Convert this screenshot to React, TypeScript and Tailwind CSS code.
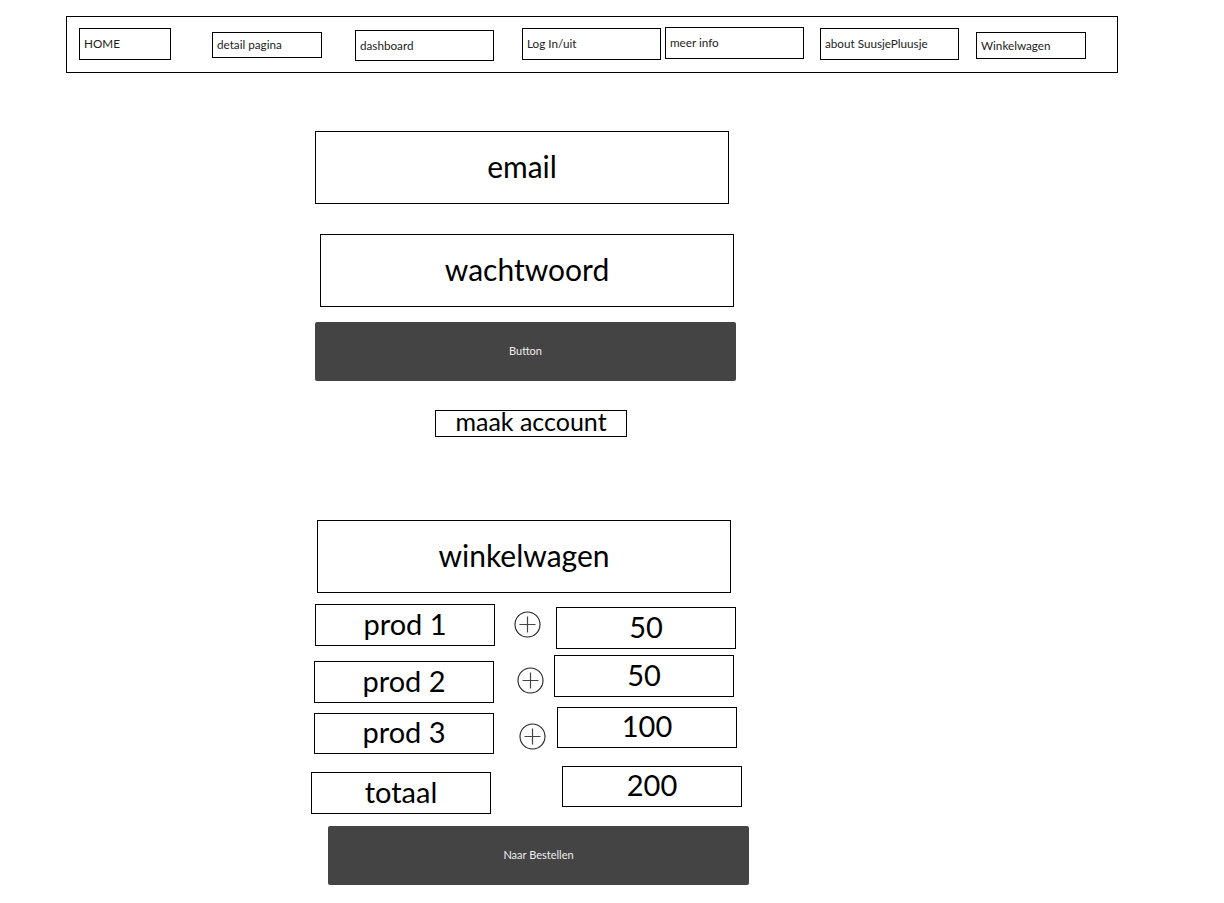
import React from 'react';

const navItems = [
  { label: 'HOME', cls: 'ml-[12px] mt-[11px] w-[92px] h-[32px]' },
  { label: 'detail pagina', cls: 'ml-[41px] mt-[15px] w-[110px] h-[26px]' },
  { label: 'dashboard', cls: 'ml-[33px] mt-[13px] w-[139px] h-[31px]' },
  { label: 'Log In/uit', cls: 'ml-[28px] mt-[11px] w-[139px] h-[32px]' },
  { label: 'meer info', cls: 'ml-[4px] mt-[10px] w-[139px] h-[32px]' },
  { label: 'about SuusjePluusje', cls: 'ml-[16px] mt-[11px] w-[139px] h-[32px]' },
  { label: 'Winkelwagen', cls: 'ml-[17px] mt-[15px] w-[110px] h-[27px]' },
];

const PlusCircle = ({ className }: { className: string }) => (
  <svg className={className} width="27" height="27" viewBox="0 0 27 27" fill="none">
    <circle cx="13.5" cy="13.5" r="12.5" stroke="#222" strokeWidth="1.1" />
    <path d="M13.5 5.5v16M5.5 13.5h16" stroke="#444" strokeWidth="1.2" />
  </svg>
);

const Box = ({ label, className, text = 'text-[30px]' }: { label: string; className: string; text?: string }) => (
  <div className={`flex items-center justify-center border border-black shrink-0 leading-none text-black pb-[4px] ${text} ${className}`}>
    {label}
  </div>
);

export default function App() {
  return (
    <div className="w-[1224px] h-[903px] bg-white overflow-hidden font-['Lato','Noto_Sans',sans-serif] flex flex-col">
      {/* top navigation */}
      <nav className="mt-[16px] ml-[66px] w-[1052px] h-[57px] border border-black flex items-start shrink-0">
        {navItems.map(item => (
          <div
            key={item.label}
            className={`flex items-center border border-black pl-[4px] text-[11.7px] text-[#222] shrink-0 ${item.cls}`}
          >
            {item.label}
          </div>
        ))}
      </nav>

      {/* login */}
      <Box label="email" className="ml-[315px] mt-[58px] w-[414px] h-[73px]" />
      <Box label="wachtwoord" className="ml-[320px] mt-[30px] w-[414px] h-[73px]" />
      <button className="ml-[315px] mt-[15px] w-[421px] h-[59px] rounded-[2px] bg-[#444444] text-[11px] text-[#eeeeee] shrink-0">
        Button
      </button>
      <Box label="maak account" text="text-[25px]" className="ml-[435px] mt-[29px] w-[192px] h-[27px]" />

      {/* cart */}
      <Box label="winkelwagen" className="ml-[317px] mt-[83px] w-[414px] h-[73px]" />

      <div className="flex items-start mt-[11px] shrink-0">
        <Box label="prod 1" text="text-[29px]" className="ml-[315px] w-[180px] h-[42px]" />
        <PlusCircle className="ml-[19px] mt-[7px] shrink-0" />
        <Box label="50" text="text-[29px]" className="ml-[15px] mt-[3px] w-[180px] h-[42px]" />
      </div>
      <div className="flex items-start mt-[6px] shrink-0">
        <Box label="prod 2" text="text-[29px]" className="ml-[314px] mt-[6px] w-[180px] h-[42px]" />
        <PlusCircle className="ml-[23px] mt-[12px] shrink-0" />
        <Box label="50" text="text-[29px]" className="ml-[10px] w-[180px] h-[42px]" />
      </div>
      <div className="flex items-start mt-[4px] shrink-0">
        <Box label="prod 3" text="text-[29px]" className="ml-[314px] mt-[6px] w-[180px] h-[41px]" />
        <PlusCircle className="ml-[25px] mt-[16px] shrink-0" />
        <Box label="100" text="text-[29px]" className="ml-[11px] w-[180px] h-[41px]" />
      </div>
      <div className="flex items-start mt-[12px] shrink-0">
        <Box label="totaal" text="text-[29px]" className="ml-[311px] mt-[6px] w-[180px] h-[42px]" />
        <Box label="200" text="text-[29px]" className="ml-[71px] w-[180px] h-[41px]" />
      </div>

      <button className="ml-[328px] mt-[12px] w-[421px] h-[59px] rounded-[2px] bg-[#444444] text-[11px] text-[#eeeeee] shrink-0">
        Naar Bestellen
      </button>
    </div>
  );
}
